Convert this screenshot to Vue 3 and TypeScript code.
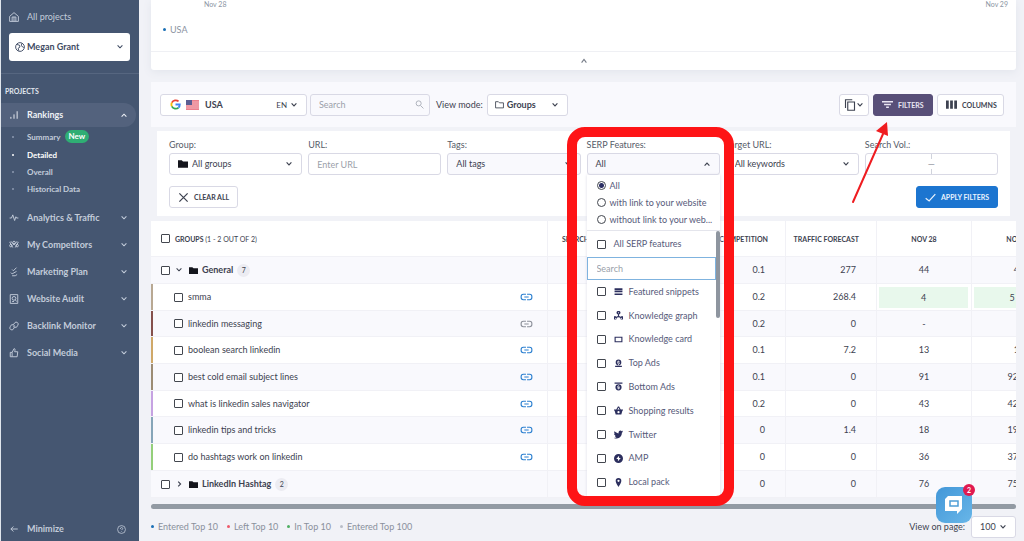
<script setup lang="ts">
import { ref } from 'vue'

interface NavItem {
  label: string
  icon: string
}

interface KeywordRow {
  keyword: string
  tone: string
  linked: boolean
  competition: string
  traffic: string
  first: string
  second: string
  top?: boolean
}

const navItems: NavItem[] = [
  { label: 'Analytics & Traffic', icon: 'M1 8h3l2-5 3 9 2-6 1 2h3' },
  { label: 'My Competitors', icon: 'M1 3l5 9M3 2l5 6M15 3l-5 9M13 2L8 8M1 9a2 2 0 1 0 4 0a2 2 0 1 0-4 0M11 9a2 2 0 1 0 4 0a2 2 0 1 0-4 0M6 4a2 2 0 1 0 4 0a2 2 0 1 0-4 0' },
  { label: 'Marketing Plan', icon: 'M5 4l2 2 5-5M3 9l2 2 7-4M5 14h5l3-2' },
  { label: 'Website Audit', icon: 'M2 1h12v14H2zM5 7a3 3 0 1 0 6 0a3 3 0 1 0-6 0M10 9l2 3M5 12h3' },
  { label: 'Backlink Monitor', icon: 'M7 6l2-3a3 3 0 0 1 5 4l-2 3H9L7 8M9 9l-2 4a3 3 0 0 1-5-4l2-3h3l2 2' },
  { label: 'Social Media', icon: 'M5 7l3-6c2 0 2 2 1 5h5l-1 8H5zM5 7H2v7h3' },
]

const subItems = [
  { label: 'Summary', badge: 'New', active: false },
  { label: 'Detailed', badge: '', active: true },
  { label: 'Overall', badge: '', active: false },
  { label: 'Historical Data', badge: '', active: false },
]

const rows: KeywordRow[] = [
  { keyword: 'smma', tone: 'sand', linked: true, competition: '0.2', traffic: '268.4', first: '4', second: '5 +1', top: true },
  { keyword: 'linkedin messaging', tone: 'brick', linked: false, competition: '0.2', traffic: '0', first: '-', second: '-' },
  { keyword: 'boolean search linkedin', tone: 'gold', linked: true, competition: '0.1', traffic: '7.2', first: '13', second: '12' },
  { keyword: 'best cold email subject lines', tone: 'olive', linked: true, competition: '0.1', traffic: '0', first: '91', second: '92 +1' },
  { keyword: 'what is linkedin sales navigator', tone: 'violet', linked: true, competition: '0.2', traffic: '0', first: '43', second: '42 +1' },
  { keyword: 'linkedin tips and tricks', tone: 'steel', linked: true, competition: '0', traffic: '1.4', first: '18', second: '19 +1' },
  { keyword: 'do hashtags work on linkedin', tone: 'green', linked: true, competition: '0', traffic: '0', first: '36', second: '37 +1' },
]

const features = [
  { label: 'Featured snippets', icon: 'M1 2h14v4H1zM1 7h14v2H1zM1 10h14v1H1zM1 12h14v2H1z' },
  { label: 'Knowledge graph', icon: 'M8 0a3 3 0 0 1 1 6v3l3 1a3 3 0 1 1-1 2l-3-1-3 1a3 3 0 1 1-1-2l3-1V6a3 3 0 0 1 1-6zM8 2a1 1 0 1 0 0 2a1 1 0 0 0 0-2zM3 12a1 1 0 1 0 0 2a1 1 0 0 0 0-2zM13 12a1 1 0 1 0 0 2a1 1 0 0 0 0-2z' },
  { label: 'Knowledge card', icon: 'M1 3h14v10H1zM3 5v6h10V5z' },
  { label: 'Top Ads', icon: 'M8 1a5 5 0 1 0 0 10A5 5 0 0 0 8 1zM7 3h2v1h1v1H7v1h3v3H9v1H7V9H6V8h3V7H6V4h1zM2 12h12v2H2z' },
  { label: 'Bottom Ads', icon: 'M1 1h14v2H1zM8 4a5 5 0 1 0 0 11A5 5 0 0 0 8 4zM7 6h2v1h1v1H7v1h3v3H9v1H7v-1H6v-1h3v-1H6V7h1z' },
  { label: 'Shopping results', icon: 'M0 6h4l3-5h2l3 5h4v2h-1l-2 7H3L1 8H0zM6 6h4L8 3zM8 9a2 2 0 1 0 0 4a2 2 0 0 0 0-4z' },
  { label: 'Twitter', icon: 'M16 3l-2 2c0 6-4 10-9 10-2 0-4 0-5-1 2 0 3 0 5-1-2 0-3-1-3-3h1C1 9 0 8 0 6l2 1C0 5 0 3 1 2c2 2 4 3 7 4 0-3 1-5 4-5l2 1 2-1-1 2z' },
  { label: 'AMP', icon: 'M8 0a8 8 0 1 0 0 16A8 8 0 0 0 8 0zM9 3v4h3l-5 6V9H4z' },
  { label: 'Local pack', icon: 'M8 0a5 5 0 0 0-5 5c0 4 5 11 5 11s5-7 5-11a5 5 0 0 0-5-5zM8 3a2 2 0 1 1 0 4a2 2 0 0 1 0-4z' },
]

const linkScopes = ['All', 'with link to your website', 'without link to your web...']
const scope = ref('All')
const serpOpen = ref(true)
const search = ref('')
const url = ref('')
const featureSearch = ref('')

const legend = [
  { label: 'Entered Top 10', tone: 'blue' },
  { label: 'Left Top 10', tone: 'red' },
  { label: 'In Top 10', tone: 'mint' },
  { label: 'Entered Top 100', tone: 'grey' },
]

const folder = 'M0 2h6l2 2h8v10H0z'
</script>

<template>
  <div class="shell">
    <nav class="sidebar" aria-label="Main">
      <a class="nav-link home" href="#">
        <svg class="nav-icon" viewBox="0 0 16 16"><path d="M1 7l7-6 7 6v8H1zM5 15V8h6v7M8 8v7" /></svg>
        <span>All projects</span>
      </a>
      <button class="account" type="button">
        <svg class="nav-icon" viewBox="0 0 16 16"><path d="M1 8a7 7 0 1 0 14 0a7 7 0 1 0-14 0M3 4l4 1 1 3-3 2 1 4M11 2l-1 4 4 3" /></svg>
        <span>Megan Grant</span>
        <svg class="chev" viewBox="0 0 10 10"><path d="M2 3l3 3 3-3" /></svg>
      </button>
      <div class="section-title">PROJECTS</div>
      <a class="nav-link current" href="#">
        <svg class="nav-icon" viewBox="0 0 16 16"><path d="M3 14v-3M8 14V7M13 14V2" /></svg>
        <span>Rankings</span>
        <svg class="chev" viewBox="0 0 10 10"><path d="M2 7l3-3 3 3" /></svg>
      </a>
      <ul class="sub-nav">
        <li v-for="item in subItems" :key="item.label">
          <a href="#" :class="{ active: item.active }">{{ item.label }}</a>
          <span v-if="item.badge" class="new">{{ item.badge }}</span>
        </li>
      </ul>
      <a v-for="item in navItems" :key="item.label" class="nav-link" href="#">
        <svg class="nav-icon" viewBox="0 0 16 16"><path :d="item.icon" /></svg>
        <span>{{ item.label }}</span>
        <svg class="chev" viewBox="0 0 10 10"><path d="M2 3l3 3 3-3" /></svg>
      </a>
      <button class="nav-link minimize" type="button">
        <svg class="nav-icon" viewBox="0 0 16 16"><path d="M14 8H3M7 4L3 8l4 4" /></svg>
        <span>Minimize</span>
        <svg class="chev help" viewBox="0 0 16 16"><path d="M1 8a7 7 0 1 0 14 0a7 7 0 1 0-14 0M6 7c0-4 5-3 4 0L8 9M8 11v1" /></svg>
      </button>
    </nav>

    <main class="main">
      <section class="chart-card">
        <div class="axis"><span>Nov 28</span><span>Nov 29</span></div>
        <div class="series">USA</div>
        <button class="collapse" type="button" aria-label="Collapse chart">
          <svg class="chev" viewBox="0 0 10 10"><path d="M2 7l3-4 3 4" /></svg>
        </button>
      </section>

      <section class="toolbar">
        <button class="control region" type="button">
          <svg class="google" viewBox="0 0 18 18">
            <path class="g-red" d="M3 6a7 7 0 0 1 11-2" />
            <path class="g-yellow" d="M3 12a7 7 0 0 1 0-6" />
            <path class="g-green" d="M14 14a7 7 0 0 1-11-2" />
            <path class="g-blue" d="M9 9h7c0 2-1 4-2 5" />
          </svg>
          <svg class="flag" viewBox="0 0 13 10">
            <rect class="f-red" width="13" height="10" />
            <path class="f-white" d="M0 2h13M0 4h13M0 6h13M0 8h13" />
            <rect class="f-blue" width="6" height="5" />
          </svg>
          <b>USA</b>
          <span class="lang">EN</span>
          <svg class="chev" viewBox="0 0 10 10"><path d="M2 3l3 3 3-3" /></svg>
        </button>
        <div class="control search">
          <input v-model="search" type="text" placeholder="Search" aria-label="Search keywords" />
          <svg class="lens" viewBox="0 0 16 16"><path d="M2 6a4 4 0 1 0 9 0a4 4 0 1 0-9 0M10 10l5 5" /></svg>
        </div>
        <label class="mode-label" for="mode">View mode:</label>
        <div class="control mode">
          <svg class="outline-folder" viewBox="0 0 16 16"><path d="M1 3h5l2 2h7v9H1z" /></svg>
          <select id="mode"><option>Groups</option></select>
          <svg class="chev" viewBox="0 0 10 10"><path d="M2 3l3 3 3-3" /></svg>
        </div>
        <div class="actions">
          <button class="control copy" type="button" aria-label="Copy">
            <svg class="copy-icon" viewBox="0 0 16 16"><path d="M5 4h9v11H5zM2 12V1h9" /></svg>
            <svg class="chev" viewBox="0 0 10 10"><path d="M2 3l3 3 3-3" /></svg>
          </button>
          <div class="pointed">
            <button class="control filters-btn" type="button">
              <svg class="btn-icon" viewBox="0 0 16 16"><path d="M0 4h16M3 8h10M6 12h4" /></svg>FILTERS
            </button>
            <svg class="arrow" viewBox="0 0 44 86">
              <path class="arrow-line" d="M4 82L34 14" />
              <path class="arrow-head" d="M38 2l1 14-12-5z" />
            </svg>
          </div>
          <button class="control columns-btn" type="button">
            <svg class="btn-icon solid" viewBox="0 0 16 16"><path d="M0 2h4v12H0zM6 2h4v12H6zM12 2h4v12h-4z" /></svg>COLUMNS
          </button>
        </div>
      </section>

      <section class="filters">
        <div class="fields">
          <div class="field">
            <label for="group">Group:</label>
            <div class="control with-icon">
              <svg class="folder" viewBox="0 0 16 16"><path :d="folder" /></svg>
              <select id="group"><option>All groups</option></select>
              <svg class="chev" viewBox="0 0 10 10"><path d="M2 3l3 3 3-3" /></svg>
            </div>
          </div>
          <div class="field">
            <label for="url">URL:</label>
            <div class="control"><input id="url" v-model="url" type="text" placeholder="Enter URL" /></div>
          </div>
          <div class="field">
            <label for="tags">Tags:</label>
            <div class="control tinted">
              <select id="tags"><option>All tags</option></select>
              <svg class="chev" viewBox="0 0 10 10"><path d="M2 3l3 3 3-3" /></svg>
            </div>
          </div>
          <div class="field serp">
            <label for="serp">SERP Features:</label>
            <button id="serp" class="control tinted" type="button" :aria-expanded="serpOpen" @click="serpOpen = !serpOpen">
              <span>All</span>
              <svg class="chev" viewBox="0 0 10 10"><path d="M2 7l3-3 3 3" /></svg>
            </button>
            <div v-if="serpOpen" class="menu">
              <div class="scopes">
                <label v-for="option in linkScopes" :key="option">
                  <input v-model="scope" type="radio" name="scope" :value="option" />{{ option }}
                </label>
              </div>
              <div class="feature-area">
                <label class="feature all"><input type="checkbox" />All SERP features</label>
                <input v-model="featureSearch" class="feature-search" type="text" placeholder="Search" aria-label="Search features" />
                <div class="feature-list">
                  <label v-for="feature in features" :key="feature.label" class="feature">
                    <input type="checkbox" />
                    <svg viewBox="0 0 16 16"><path fill-rule="evenodd" :d="feature.icon" /></svg>
                    {{ feature.label }}
                  </label>
                </div>
                <div class="thumb"></div>
              </div>
            </div>
            <div class="highlight"></div>
          </div>
          <div class="field">
            <label for="target">Target URL:</label>
            <div class="control">
              <select id="target"><option>All keywords</option></select>
              <svg class="chev" viewBox="0 0 10 10"><path d="M2 3l3 3 3-3" /></svg>
            </div>
          </div>
          <div class="field">
            <label for="volume-from">Search Vol.:</label>
            <div class="control range">
              <input id="volume-from" type="text" /><span>—</span><input type="text" aria-label="Search volume to" />
            </div>
          </div>
        </div>
        <div class="filter-actions">
          <button class="control clear" type="button">
            <svg class="btn-icon" viewBox="0 0 16 16"><path d="M2 2l12 12M14 2L2 14" /></svg>CLEAR ALL
          </button>
          <button class="control apply" type="button">
            <svg class="btn-icon" viewBox="0 0 16 16"><path d="M1 9l5 4 9-10" /></svg>APPLY FILTERS
          </button>
        </div>
      </section>

      <div class="table-wrap">
        <table>
          <colgroup>
            <col /><col class="c-vol" /><col class="c-comp" /><col class="c-traffic" /><col class="c-date" /><col class="c-date" />
          </colgroup>
          <thead>
            <tr>
              <th scope="col">
                <div class="name-cell">
                  <input type="checkbox" aria-label="Select all" />
                  <span class="head-title">GROUPS <i>(1 - 2 OUT OF 2)</i></span>
                </div>
              </th>
              <th scope="col" class="volume">SEARCH</th>
              <th scope="col" class="right">COMPETITION</th>
              <th scope="col" class="right">TRAFFIC FORECAST</th>
              <th scope="col">NOV 28</th>
              <th scope="col">NOV 29</th>
            </tr>
          </thead>
          <tbody>
            <tr class="group">
              <td>
                <div class="name-cell">
                  <input type="checkbox" aria-label="Select General" />
                  <svg class="chev" viewBox="0 0 10 10"><path d="M2 3l3 3 3-3" /></svg>
                  <svg class="folder" viewBox="0 0 16 16"><path :d="folder" /></svg>
                  <b>General</b><span class="count">7</span>
                </div>
              </td>
              <td></td><td class="num">0.1</td><td class="num">277</td><td class="rank">44</td><td class="rank">44</td>
            </tr>
            <tr v-for="row in rows" :key="row.keyword" class="keyword">
              <td>
                <div class="name-cell" :class="row.tone">
                  <input :id="row.tone" type="checkbox" />
                  <label :for="row.tone">{{ row.keyword }}</label>
                  <svg class="link" :class="{ muted: !row.linked }" viewBox="0 0 24 14"><path d="M11 2H6a4 5 0 0 0 0 10h5M13 2h5a4 5 0 0 1 0 10h-5M8 7h8" /></svg>
                </div>
              </td>
              <td></td>
              <td class="num">{{ row.competition }}</td>
              <td class="num">{{ row.traffic }}</td>
              <td class="rank" :class="{ top: row.top }"><span>{{ row.first }}</span></td>
              <td class="rank" :class="{ top: row.top }"><span>{{ row.second }}</span></td>
            </tr>
            <tr class="group">
              <td>
                <div class="name-cell">
                  <input type="checkbox" aria-label="Select LinkedIn Hashtag" />
                  <svg class="chev" viewBox="0 0 10 10"><path d="M4 2l3 3-3 3" /></svg>
                  <svg class="folder" viewBox="0 0 16 16"><path :d="folder" /></svg>
                  <b>LinkedIn Hashtag</b><span class="count">2</span>
                </div>
              </td>
              <td></td><td class="num">0</td><td class="num">0</td><td class="rank">76</td><td class="rank">75 +1</td>
            </tr>
          </tbody>
        </table>
      </div>
      <div class="scrollbar"></div>

      <footer class="footer">
        <ul class="legend">
          <li v-for="item in legend" :key="item.label" :class="item.tone">{{ item.label }}</li>
        </ul>
        <label for="page-size">View on page:</label>
        <div class="control page-size">
          <select id="page-size"><option>100</option></select>
          <svg class="chev" viewBox="0 0 10 10"><path d="M2 3l3 3 3-3" /></svg>
        </div>
      </footer>
    </main>

    <button class="chat" type="button" aria-label="Open chat">
      <svg viewBox="0 0 20 20"><path class="bubble" d="M4 1h14v13l-5 5v-3H1V4z" /><path class="screen" d="M6 6h8v5H6z" /></svg>
      <span class="chat-count">2</span>
    </button>
  </div>
</template>

<style>
body {
  background: #f1f2f7;
}
</style>

<style scoped>
.shell {
  display: flex;
  height: 100vh;
  overflow: hidden;
  box-sizing: border-box;
  border-left: 1px solid #dfe5ec;
  font-family: Lato, "Open Sans", sans-serif;
  font-size: 9px;
  line-height: 12px;
  color: #3d4250;
}
.shell *,
.shell *::before {
  box-sizing: border-box;
}
button,
input,
select {
  font: inherit;
  color: inherit;
  margin: 0;
  padding: 0;
  border: 0;
  background: none;
  outline: 0;
  appearance: none;
}
ul {
  list-style: none;
  margin: 0;
  padding: 0;
}
a {
  color: inherit;
  text-decoration: none;
}
svg {
  flex: none;
  fill: none;
  stroke: currentColor;
  stroke-width: 1.5;
}
.chev {
  width: 8px;
  height: 8px;
  stroke-width: 1.4;
}

/* sidebar */
.sidebar {
  display: flex;
  flex-direction: column;
  flex: none;
  width: 138px;
  padding-top: 3px;
  background: #455671;
  color: #c3ccda;
  font-weight: 700;
}
.nav-link {
  display: flex;
  align-items: center;
  flex: none;
  height: 27px;
  padding: 0 11px 0 8px;
  text-align: left;
}
.nav-icon {
  width: 10px;
  height: 10px;
  margin-right: 8px;
}
.nav-link .chev,
.account .chev {
  margin-left: auto;
}
.home {
  font-weight: 400;
}
.account {
  display: flex;
  align-items: center;
  flex: none;
  height: 28px;
  margin: 3px 9px 12px 8px;
  padding: 0 6px;
  border-radius: 3px;
  background: #fff;
  color: #3f4b63;
}
.account .nav-icon {
  margin-right: 2px;
}
.section-title {
  padding: 11px 4px 6px;
  border-top: 1px solid #566680;
  font-size: 7px;
  color: #e0e6ee;
}
.current {
  height: 24px;
  margin-right: 3px;
  padding-right: 8px;
  border-radius: 0 12px 12px 0;
  background: #53627d;
  color: #eef1f6;
}
.sub-nav {
  padding-bottom: 7px;
  font-size: 8px;
}
.sub-nav li {
  display: flex;
  align-items: center;
  height: 17px;
}
.sub-nav li:first-child {
  height: 19px;
}
.sub-nav a::before {
  content: "";
  display: inline-block;
  width: 2px;
  height: 2px;
  margin: 0 13px 2px 11px;
  border-radius: 50%;
  background: #8d9ab0;
}
.sub-nav .active {
  color: #fff;
}
.sub-nav .active::before {
  background: #fff;
}
.new {
  margin-left: 4px;
  padding: 0 4px;
  border-radius: 7px;
  line-height: 13px;
  background: #2fae74;
  color: #fff;
}
.minimize {
  height: 24px;
  margin-top: auto;
  font-weight: 700;
}
.nav-link .help {
  width: 9px;
  height: 9px;
  margin-right: 2px;
}

/* content */
.main {
  display: flex;
  flex-direction: column;
  flex: 1;
  min-width: 0;
  padding: 0 8px 0 12px;
}
.chart-card {
  flex: none;
  height: 70px;
  border-radius: 0 0 3px 3px;
  background: #fff;
  box-shadow: 0 2px 8px #e2e5ec;
}
.axis {
  display: flex;
  justify-content: space-between;
  padding: 0 8px 0 53px;
  font-size: 7px;
  line-height: 8px;
  color: #8b95a3;
}
.series {
  padding: 16px 12px 15px;
  border-bottom: 1px solid #eff0f4;
  color: #8b93a1;
}
.series::before,
.legend li::before {
  content: "";
  display: inline-block;
  width: 3px;
  height: 3px;
  margin: 0 4px 2px 0;
  border-radius: 50%;
  background: #1a6fb5;
}
.collapse {
  display: block;
  width: 100%;
  height: 18px;
  line-height: 8px;
  color: #777d88;
}
.control {
  display: flex;
  align-items: center;
  position: relative;
  height: 22px;
  padding: 0 8px;
  border: 1px solid #d9d9e5;
  border-radius: 3px;
  background: #fff;
}
.control input,
.control select {
  flex: 1;
  width: 100%;
  min-width: 0;
  height: 100%;
}
.control ::placeholder,
.feature-search::placeholder {
  color: #9b9faa;
  opacity: 1;
}
.control > .chev {
  margin-left: auto;
  stroke-width: 1.5;
}
.toolbar {
  display: flex;
  align-items: center;
  flex: none;
  height: 45px;
  margin-top: 12px;
  padding: 0 12px 0 9px;
  background: #f9f9fd;
}
.region {
  width: 147px;
  margin-right: 3px;
  padding-left: 9px;
}
.google {
  width: 11px;
  height: 11px;
  margin-right: 5px;
  stroke-width: 3;
}
.g-red { stroke: #ea4335; }
.g-yellow { stroke: #fbbc05; }
.g-green { stroke: #34a853; }
.g-blue { stroke: #4285f4; }
.flag {
  width: 13px;
  height: 10px;
  margin-right: 6px;
  stroke: none;
}
.f-red { fill: #ec7f8d; }
.f-white { stroke: #f3b3bb; stroke-width: 1; }
.f-blue { fill: #5a5d93; }
.lang {
  margin-left: auto;
  margin-right: 3px;
  font-size: 8px;
}
.region > .chev {
  margin-left: 0;
}
.search {
  width: 120px;
  padding-right: 5px;
  background: #f9f9fd;
}
.lens {
  width: 9px;
  height: 9px;
  color: #a3a7b2;
}
.mode-label {
  margin: 0 4px 0 6px;
}
.mode {
  width: 81px;
  padding-left: 7px;
  font-weight: 700;
}
.outline-folder {
  width: 9px;
  height: 9px;
  margin-right: 3px;
}
.actions {
  display: flex;
  gap: 4px;
  margin-left: auto;
}
.actions .control,
.filter-actions .control {
  font-size: 7px;
  font-weight: 700;
}
.copy {
  width: 30px;
  padding: 0 4px;
}
.copy-icon {
  width: 12px;
  height: 12px;
}
.btn-icon {
  width: 11px;
  height: 11px;
  margin-right: 5px;
  stroke-width: 2;
}
.solid {
  fill: currentColor;
  stroke: none;
}
.pointed {
  position: relative;
}
.pointed .filters-btn {
  width: 60px;
  border-color: #584f78;
  background: #584f78;
  color: #e9e6f2;
}
.columns-btn {
  width: 67px;
}
.arrow {
  position: absolute;
  left: -24px;
  top: 26px;
  z-index: 6;
  width: 44px;
  height: 86px;
}
.arrow-line {
  stroke: #ef1c20;
  stroke-width: 2;
  stroke-linecap: round;
}
.arrow-head {
  fill: #ef1c20;
  stroke: none;
}
.filters {
  flex: none;
  margin: 4px 6px 0;
  padding: 8px 12px;
  background: #fff;
}
.fields {
  display: grid;
  grid-template-columns: repeat(6, minmax(0, 1fr));
  gap: 6px;
}
.field > label {
  display: block;
  height: 14px;
  color: #565c69;
}
.tinted {
  background: #f9f9fd;
}
.folder {
  width: 9px;
  height: 9px;
  margin-right: 4px;
  fill: #14151c;
  stroke: none;
}
.with-icon .folder {
  width: 10px;
  height: 10px;
}
.range {
  padding: 0;
  color: #8d919c;
  background-image: linear-gradient(#d0d3dc, #d0d3dc), linear-gradient(#d0d3dc, #d0d3dc);
  background-size: 1px 5px;
  background-position: center top, center bottom;
  background-repeat: no-repeat;
}
.filter-actions {
  display: flex;
  justify-content: space-between;
  margin-top: 11px;
}
.filter-actions .btn-icon {
  stroke-width: 1.8;
}
.filter-actions .apply {
  border-color: #1c75d0;
  background: #1c75d0;
  color: #e8f2fd;
}

/* SERP features menu */
.serp {
  position: relative;
}
.serp .control {
  width: 100%;
}
.menu {
  display: flex;
  flex-direction: column;
  position: absolute;
  z-index: 4;
  top: 36px;
  left: 0;
  right: 0;
  height: 322px;
  background: #fff;
  box-shadow: 0 0 3px #dcdde6;
  color: #565a7a;
}
.scopes {
  padding: 2px 0 2px 10px;
  border-bottom: 1px solid #e4e5ec;
}
.scopes label {
  display: flex;
  align-items: center;
  height: 17px;
  white-space: nowrap;
}
input[type="checkbox"],
input[type="radio"] {
  flex: none;
  width: 9px;
  height: 9px;
  border: 1px solid #43474f;
  border-radius: 1px;
  background: #fff;
}
input[type="radio"] {
  margin-right: 4px;
  border-radius: 50%;
}
input[type="radio"]:checked {
  background: radial-gradient(circle, #2b2f63 0 2px, #fff 3px);
}
.feature-area {
  display: flex;
  flex-direction: column;
  flex: 1;
  position: relative;
  padding: 0 4px 3px 0;
}
.feature {
  display: flex;
  align-items: center;
  padding-left: 10px;
}
.feature svg {
  width: 9px;
  height: 9px;
  margin: 0 6px 0 8px;
  fill: #2c2f5e;
  stroke: none;
}
.all {
  height: 26px;
}
.all input {
  margin-right: 8px;
}
.feature-area .feature-search {
  height: 23px;
  padding: 0 9px;
  border: 1px solid #7fb3df;
}
.feature-list {
  display: grid;
  grid-auto-rows: 1fr;
  flex: 1;
}
.thumb {
  position: absolute;
  top: 0;
  right: 0;
  width: 4px;
  height: 87px;
  border-radius: 2px;
  background: #8e959f;
}
.highlight {
  position: absolute;
  z-index: 5;
  top: -12px;
  left: -20px;
  right: -14px;
  height: 379px;
  border: 10px solid #fe1416;
  border-radius: 18px;
  pointer-events: none;
}

/* table */
.table-wrap {
  flex: none;
  margin-top: 5px;
  overflow: hidden;
  background: #fff;
}
table {
  width: calc(100% + 51px);
  table-layout: fixed;
  border-collapse: separate;
  border-spacing: 0;
}
.c-vol { width: 152px; }
.c-comp { width: 86px; }
.c-traffic { width: 91px; }
.c-date { width: 95px; }
th,
td {
  height: 27px;
  padding: 0;
  border-right: 1px solid #f1f1f6;
  border-bottom: 1px solid #f1f1f6;
}
th {
  height: 36px;
  font-size: 7px;
}
.volume {
  padding-left: 14px;
  text-align: left;
}
.right {
  padding-right: 17px;
  text-align: right;
}
.keyword:nth-child(3n) td {
  height: 26px;
}
tbody tr:nth-child(odd) {
  background: #f9f9fd;
}
.num {
  padding-right: 20px;
  text-align: right;
}
.rank {
  text-align: center;
}
.top span {
  display: block;
  margin: 0 3px 0 2px;
  line-height: 21px;
  background: #e8f8ec;
}
.name-cell {
  display: flex;
  align-items: center;
  height: 100%;
  padding-left: 10px;
}
.head-title {
  margin-left: 5px;
}
.head-title i {
  font-style: normal;
  font-weight: 400;
}
.group .chev {
  margin: 0 6px 0 5px;
}
.count {
  width: 13px;
  margin-left: 4px;
  border-radius: 50%;
  font-size: 7px;
  line-height: 13px;
  text-align: center;
  background: #ececf2;
}
.keyword .name-cell {
  padding: 0 14px 0 21px;
  border-left-width: 2px;
  border-left-style: solid;
}
.keyword label {
  margin-left: 5px;
}
.sand { border-color: #b8a892; }
.brick { border-color: #85504c; }
.gold { border-color: #cfa868; }
.olive { border-color: #9c8c74; }
.violet { border-color: #c6a2e2; }
.steel { border-color: #86a5b8; }
.green { border-color: #94cf7a; }
.link {
  width: 13px;
  height: 8px;
  margin-left: auto;
  stroke-width: 2;
  color: #2a7fd0;
}
.muted {
  color: #8c909a;
}
.scrollbar {
  flex: none;
  height: 5px;
  margin-top: 6px;
  border-radius: 3px;
  background: #929aa3;
}
.footer {
  display: flex;
  align-items: center;
  margin-top: 7px;
}
.legend {
  display: flex;
  gap: 9px;
  margin-right: auto;
  color: #8a909c;
}
.legend .red::before { background: #ee5a6a; }
.legend .mint::before { background: #4fae62; }
.legend .grey::before { background: #b9bdc7; }
.page-size {
  width: 45px;
  margin-left: 6px;
}

/* chat launcher */
.chat {
  display: flex;
  align-items: center;
  justify-content: center;
  position: fixed;
  z-index: 7;
  right: 52px;
  bottom: 18px;
  width: 36px;
  height: 36px;
  border-radius: 9px;
  background: linear-gradient(135deg, #4397d8, #68b6e8);
}
.chat svg {
  width: 20px;
  height: 20px;
}
.bubble {
  fill: #fff;
  stroke: none;
}
.screen {
  stroke: #4f9fd6;
}
.chat-count {
  position: absolute;
  top: -3px;
  right: -3px;
  width: 12px;
  border-radius: 50%;
  font-size: 7px;
  font-weight: 700;
  line-height: 12px;
  background: #e11a50;
  color: #fff;
}
</style>
